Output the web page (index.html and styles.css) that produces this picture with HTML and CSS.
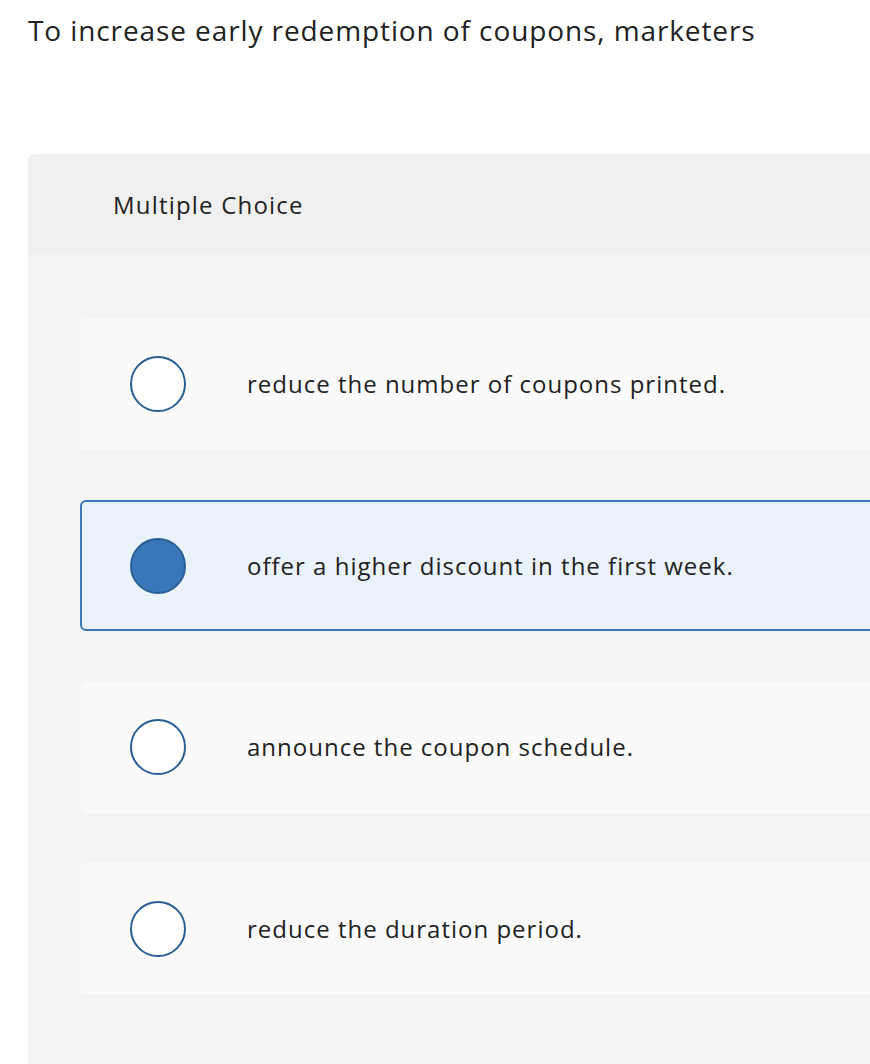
FILE: index.html
```html
<!DOCTYPE html>
<html>
<head>
<meta charset="utf-8">
<link rel="stylesheet" href="styles.css">
</head>
<body>
<div class="page">
  <h1 class="question">To increase early redemption of coupons, marketers</h1>
  <div class="panel">
    <div class="panel-head">Multiple Choice</div>
    <div class="panel-body">
      <div class="option">
        <span class="radio"></span>
        <span class="label">reduce the number of coupons printed.</span>
      </div>
      <div class="option selected">
        <span class="radio"></span>
        <span class="label">offer a higher discount in the first week.</span>
      </div>
      <div class="option">
        <span class="radio"></span>
        <span class="label">announce the coupon schedule.</span>
      </div>
      <div class="option">
        <span class="radio"></span>
        <span class="label">reduce the duration period.</span>
      </div>
    </div>
  </div>
</div>
</body>
</html>
```

FILE: styles.css
```css
html, body {
  margin: 0;
  padding: 0;
  background: #ffffff;
  overflow: hidden;
}
body {
  width: 870px;
  height: 1064px;
  font-family: "Open Sans", Lato, sans-serif;
  font-variant-ligatures: none;
  color: #222222;
}
.page {
  padding-left: 28px;
  width: 960px;
}
.question {
  margin: 0;
  padding-top: 12px;
  font-size: 28px;
  letter-spacing: 0.9px;
  font-weight: 400;
  line-height: 36px;
  height: 142px;
  color: #222;
}
.panel {
  background: #f4f4f4;
  border-radius: 6px 0 0 0;
  height: 1000px;
}
.panel-head {
  background: #f0f0f0;
  height: 100px;
  padding-left: 85px;
  box-sizing: border-box;
  display: flex;
  align-items: center;
  font-size: 24px;
  letter-spacing: 1.2px;
  border-radius: 6px 0 0 0;
}
.panel-body {
  padding: 64px 0 0 52px;
  display: flex;
  flex-direction: column;
  gap: 50px;
}
.option {
  height: 132px;
  box-sizing: border-box;
  background: #fafafa;
  border-radius: 6px 0 0 6px;
  display: flex;
  align-items: center;
  padding-left: 49px;
  border: 1px solid transparent;
}
.option.selected {
  background: #eaf2fb;
  border: 2px solid #3b78b8;
  padding-left: 48px;
  height: 131px;
}
.radio {
  width: 56px;
  height: 56px;
  box-sizing: border-box;
  border-radius: 50%;
  border: 2px solid #2a5f94;
  background: #ffffff;
  flex: none;
}
.selected .radio {
  background: #3a77b8;
}
.label {
  margin-left: 61px;
  font-size: 24px;
  letter-spacing: 1px;
  line-height: 30px;
}
```
